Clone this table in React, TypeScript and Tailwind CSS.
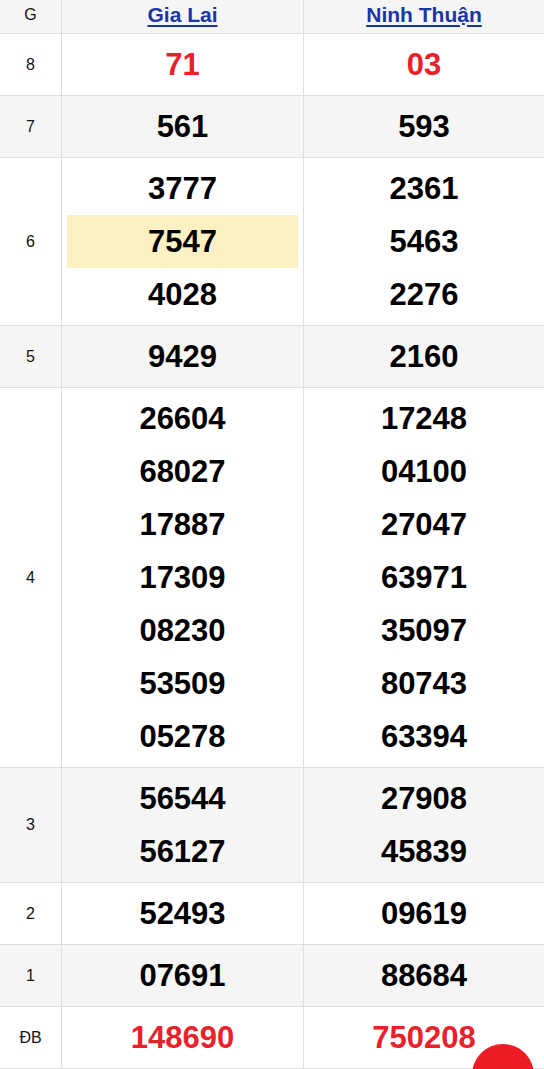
import React from "react";

type Row = { label: string; a: string[]; b: string[]; red?: boolean };

const rows: Row[] = [
  { label: "8", a: ["71"], b: ["03"], red: true },
  { label: "7", a: ["561"], b: ["593"] },
  { label: "6", a: ["3777", "7547", "4028"], b: ["2361", "5463", "2276"] },
  { label: "5", a: ["9429"], b: ["2160"] },
  {
    label: "4",
    a: ["26604", "68027", "17887", "17309", "08230", "53509", "05278"],
    b: ["17248", "04100", "27047", "63971", "35097", "80743", "63394"],
  },
  { label: "3", a: ["56544", "56127"], b: ["27908", "45839"] },
  { label: "2", a: ["52493"], b: ["09619"] },
  { label: "1", a: ["07691"], b: ["88684"] },
  { label: "ĐB", a: ["148690"], b: ["750208"], red: true },
];

function Nums({ list, red, highlightIdx, last }: { list: string[]; red?: boolean; highlightIdx?: number; last?: boolean }) {
  return (
    <div className={`flex flex-col py-[4px] ${last ? "" : "border-r border-[#dedede]"}`}>
      {list.map((n, i) => (
        <div
          key={i}
          className={`h-[53px] flex items-center justify-center mx-[5px] text-[31px] font-bold leading-none ${
            red ? "text-[#e8212b]" : "text-black"
          } ${highlightIdx === i ? "bg-[#fdf1c3]" : ""}`}
        >
          {n}
        </div>
      ))}
    </div>
  );
}

export default function App() {
  return (
    <div
      className="relative w-[544px] h-[1069px] overflow-hidden bg-white"
      style={{ fontFamily: '"Liberation Sans", Arial, sans-serif' }}
    >
      <div className="grid grid-cols-[62px_242px_240px] h-[34px] bg-[#f5f5f5] border-b border-[#dedede]">
        <div className="flex items-center justify-center border-r border-[#dedede] pb-[4px] text-[16px] text-[#111]">G</div>
        <div className="flex items-center justify-center border-r border-[#dedede] pb-[4px]">
          <span className="text-[21px] leading-none font-bold text-[#1a36a6] underline underline-offset-[3px]">Gia Lai</span>
        </div>
        <div className="flex items-center justify-center pb-[4px]">
          <span className="text-[21px] leading-none font-bold text-[#1a36a6] underline underline-offset-[3px]">Ninh Thuận</span>
        </div>
      </div>
      {rows.map((r, i) => (
        <div
          key={r.label}
          className={`grid grid-cols-[62px_242px_240px] border-b border-[#dedede] ${i % 2 === 1 ? "bg-[#f5f5f5]" : "bg-white"}`}
        >
          <div className="flex items-center justify-center border-r border-[#dedede] text-[16px] text-[#111]">{r.label}</div>
          <Nums list={r.a} red={r.red} highlightIdx={r.label === "6" ? 1 : undefined} />
          <Nums list={r.b} red={r.red} last />
        </div>
      ))}
      <div className="absolute left-[472px] top-[1044px] w-[62px] h-[62px] rounded-full bg-[#ee1c25]" />
    </div>
  );
}
